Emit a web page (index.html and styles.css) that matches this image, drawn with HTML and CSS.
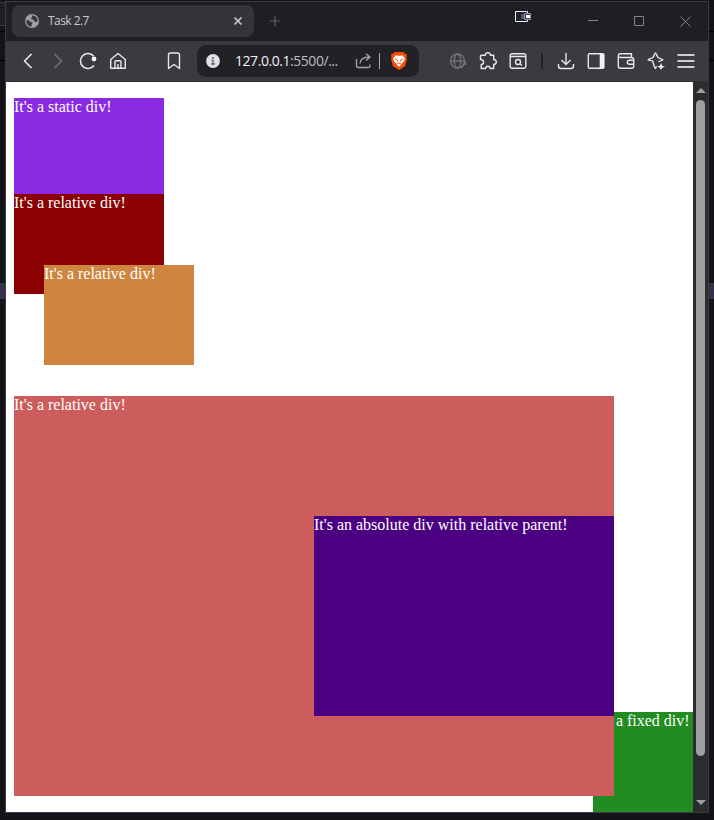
FILE: index.html
```html
<!DOCTYPE html>
<html lang="en">
<head>
<meta charset="utf-8">
<title>Task 2.7</title>
<link rel="stylesheet" href="styles.css">
</head>
<body>
<div class="window">
  <header class="titlebar">
    <div class="tab">
      <svg class="favicon" width="14" height="14" viewBox="-7 -7 14 14"><circle r="7" fill="#9aa0a6"/><path d="M-5.7-.7-2.9-.5-1 1.3.8 1.5-.3 3.2-.6 5.7C-3.5 5.5-5.8 3-5.7-.7ZM-.3-5.6.4-3.8-1-2.6-.4-1.4 1.7-1.2 2.6.7 4.7.9 5.7-.4C5.6-3.4 3-5.7-.3-5.6Z" fill="#35343a"/></svg>
      <span class="tab-title">Task 2.7</span>
      <svg class="tab-close" width="14" height="14" viewBox="-7 -7 14 14"><path d="M-3.5-3.5 3.5 3.5M3.5-3.5-3.5 3.5" stroke="#c9c9cc" stroke-width="1.7"/></svg>
    </div>
    <svg class="new-tab" width="12" height="12" viewBox="-6 -6 12 12"><path d="M-5.5 0H5.5M0-5.5V5.5" stroke="#605f64" stroke-width="1.2"/></svg>
    <svg class="mini" width="17" height="12" viewBox="0 0 17 12"><path d="M.5.5h12v10H.5Z" fill="#20202a" stroke="#eef" /><path d="M6 3h3v5H6Z" fill="#56565f"/><path d="M9.500 2.500h6v6h-6Z" fill="#39465e" stroke="#8093b2"/><path d="M11 4h4v3h-4Z" fill="#fff"/></svg>
    <svg class="controls" width="138" height="39" viewBox="0 0 138 39"><path d="M18 18.500H28M64.500 14.500h9v9h-9ZM110.500 14.500l10 10M120.500 14.500l-10 10" fill="none" stroke="#858388"/></svg>
  </header>

  <nav class="toolbar">
    <svg class="icon" viewBox="-15 -15 30 30"><path d="M3.500-7-3.500 0 3.500 7" stroke-width="1.700"/></svg>
    <svg class="icon dim" viewBox="-15 -15 30 30"><path d="M-3.500-7 3.500 0-3.500 7"/></svg>
    <svg class="icon" viewBox="-15 -15 30 30"><path d="M5.700-4.800A7.500 7.500 0 1 0 6 4.500" stroke-width="1.600"/><circle class="solid" cx="6" cy="-2" r="2.400"/></svg>
    <svg class="icon" viewBox="-15 -15 30 30"><path d="M-7.300-1.500 0-7.500 7.300-1.500V7.300H-7.300ZM-3 7V.7Q-3-.3-2-.3H2Q3-.3 3 .7V7M0 3v4"/></svg>
    <svg class="icon bookmark" viewBox="-15 -15 30 30"><path d="M-5.500 7.500V-6Q-5.500-8-3.500-8h7Q5.500-8 5.500-6V7.500L0 3.500Z"/></svg>
    <div class="address">
      <svg class="info" width="14" height="14" viewBox="-7 -7 14 14"><circle r="6.900" fill="#e1e0e6"/><path d="M-1.500-.7H0V3M-2 3H2" fill="none" stroke="#64636a" stroke-width="1.300"/><circle cy="-3" r="1" fill="#64636a"/></svg>
      <span class="url"><span class="host">127.0.0.1</span>:5500/...</span>
      <svg class="share" width="18" height="16" viewBox="0 0 18 16"><path d="M1.500 6v6.500Q1.500 14.500 3.500 14.500H13Q15 14.500 15 12.500V11.500M5 10.500Q5.500 4 14.500 4M11 .7 15 4 11 7.500" fill="none" stroke="#a7a6ac" stroke-width="1.300"/></svg>
      <span class="address-rule"></span>
      <svg class="shield" width="16" height="18" viewBox="-8 -9 16 18"><path d="M-4.500-9h9L6-7.200 8-6.800 7.500-4 8-2 6 5.200 0 9-6 5.200-8-2-7.500-4-8-6.800-6-7.200Z" fill="#fb4b05"/><path d="M-3.300-5.700-1-5.200H1l2.300-.5L6-2.500 4.700.8 2.500 2.600 2 4 0 5.700-2 4-2.500 2.600-4.700.8-6-2.500Z" fill="#fff"/><path d="M-4-2-1.800-1.300-1.200.8M4-2 1.800-1.300 1.200.8M-1.800 2.800 0 2 1.800 2.800" fill="none" stroke="#fb4b05" stroke-width=".9"/></svg>
    </div>
    <svg class="icon globe" viewBox="-15 -15 30 30"><circle cx="-.5" r="7"/><ellipse cx="-.5" rx="3.200" ry="7"/><path d="M-7.500 0H7M3.500 7 7.500 1V4"/></svg>
    <svg class="icon" viewBox="-15 -15 30 30"><path d="M-6.500-5.700H-2.600C-2.800-9.200 2.600-9.200 2.400-5.700H5.700V-1.500C9.200-1.200 9.200 3.300 5.700 3.500V7.500H2.200C2 4.500-2.200 4.500-2.400 7.500H-6.800V3.500C-3.500 3.200-3.500-1.200-7.500-1.500V-4.700Q-7.500-5.700-6.500-5.700Z"/></svg>
    <svg class="icon" viewBox="-15 -15 30 30"><rect x="-7.800" y="-7.300" width="15.600" height="14.600" rx="2"/><path d="M-7.500-4.500H7.500M2 3 4 4.500"/><circle cx="0" cy="1" r="2.500"/></svg>
    <span class="toolbar-rule"></span>
    <svg class="icon" viewBox="-15 -15 30 30"><path d="M0-8V3.500M-4.500-1 0 3.500 4.500-1M-7.500 3V5Q-7.500 7.500-5 7.500H5Q7.500 7.500 7.500 5V3"/></svg>
    <svg class="icon" viewBox="-15 -15 30 30"><rect x="-7.700" y="-7.300" width="15.600" height="14.600" rx="1"/><path class="solid" d="M3.700-7H8V7H3.700Z"/></svg>
    <svg class="icon" viewBox="-15 -15 30 30"><path d="M-7.700-5V5Q-7.700 7.300-5.500 7.300H5.500Q7.700 7.300 7.700 5V-1.500Q7.700-3.500 5.500-3.500H-6Q-7.700-3.500-7.700-5.200T-6-7.200H5.500V-3.500M8-.8H3.500Q1.300-.8 1.300 1.200T3.500 3.300H8"/></svg>
    <svg class="icon" viewBox="-15 -15 30 30"><path d="M1 5.200 0 7.500C-1 7.500-2 2-3-.2-5-.8-7.500-.5-7.500-1.200S-4-2.500-2.500-3.500C-1.500-5-.7-8 0-8S1.500-5 2.500-3.500C4-2.500 7.500-2 7.500-1.200S4-.3 3 .8" transform="translate(-.5)"/><path class="star" d="M5 2 6.200 4.700 9 5.700 6.200 6.700 5 9 3.800 6.700 1.200 5.700 3.800 4.700Z"/></svg>
    <svg class="icon menu" viewBox="-15 -15 30 30"><path d="M-8.500-6H8.500M-8.500 0H8.500M-8.500 6H8.500"/></svg>
  </nav>

  <div class="viewport">
    <main class="page">
      <div class="box static">It's a static div!</div>
      <div class="box relative">It's a relative div!</div>
      <div class="box shifted">It's a relative div!</div>
      <div class="fixed">It's a fixed div!</div>
      <div class="parent">It's a relative div!
        <div class="absolute">It's an absolute div with relative parent!</div>
      </div>
    </main>
    <div class="scrollbar">
      <span class="arrow up"></span>
      <span class="thumb"></span>
      <span class="arrow down"></span>
    </div>
  </div>
</div>
<span class="pane"></span>
<span class="edge left"></span>
<span class="edge right"></span>
</body>
</html>
```
FILE: styles.css
```css
* { box-sizing: border-box; }

body {
  margin: 0;
  height: 820px;
  padding: 1px 5px 7px;
  overflow: hidden;
  position: relative;
  background:
    linear-gradient(#000, #000) 0 31px / 100% 1px no-repeat,
    linear-gradient(#000, #000) 0 60px / 100% 1px no-repeat,
    #14131a;
}

.window {
  display: flex;
  flex-direction: column;
  width: 704px;
  height: 812px;
  border: 1px solid #3b3a3e;
}

.titlebar {
  display: flex;
  align-items: center;
  height: 39px;
  padding-left: 6px;
  background: #1f1e23;
}

.tab {
  display: flex;
  align-items: center;
  width: 242px;
  height: 32px;
  margin-top: -1px;
  padding: 0 9px 0 13px;
  border-radius: 8px;
  background: #35343a;
}

.tab-title {
  margin-left: 9px;
  color: #c9c8cd;
  font: 12px/16px "Open Sans", "Noto Sans", sans-serif;
  letter-spacing: -0.55px;
}

.tab-close { margin-left: auto; }
.new-tab { margin: -1px 0 0 15px; }
.mini { margin: -9px 0 0 234px; }
.controls { margin-left: auto; }

.toolbar {
  display: flex;
  align-items: center;
  height: 41px;
  padding: 0 7px 1px;
  border-bottom: 1px solid #302f33;
  background: #3b3a3f;
}

.icon {
  flex: none;
  width: 30px;
  height: 30px;
  fill: none;
  stroke: #e8e7ed;
  stroke-width: 1.4;
  stroke-linejoin: round;
}

.icon .solid { fill: #f2f1f7; stroke: none; }
.icon .star { fill: #f2f1f7; stroke: none; }
.dim { stroke: #77767b; }
.globe { stroke: #727176; }
.menu { stroke: #cfced3; stroke-width: 2; }
.bookmark { margin-left: 26px; }

.address {
  display: flex;
  align-items: center;
  width: 222px;
  height: 32px;
  margin: 0 24px 0 8px;
  padding-left: 9px;
  border-radius: 9px;
  background: #222126;
}

.url {
  width: 104px;
  margin-left: 15px;
  color: #bdbcc2;
  font: 14px/20px "Open Sans", "Noto Sans", sans-serif;
  letter-spacing: -0.45px;
  white-space: nowrap;
}

.host { color: #f1f0f5; }
.share { margin-left: 16px; }
.address-rule { width: 1px; height: 16px; margin-left: 6px; background: #aaa9ae; }
.shield { margin-left: 11px; }
.toolbar-rule { width: 2px; height: 16px; margin: 0 8px; background: #222126; }

.viewport {
  display: flex;
  flex: 1;
}

.page {
  position: relative;
  width: 687px;
  padding: 16px 8px 0;
  overflow: hidden;
  background: #fff;
  color: #fff;
  font: 16px/18px "Liberation Serif", "Times New Roman", serif;
}

.box { width: 150px; height: 100px; }
.static { background: blueviolet; }
.relative { position: relative; top: -4px; background: darkred; }
.shifted { position: relative; top: -33px; left: 30px; background: peru; }

.fixed {
  position: absolute;
  right: 0;
  bottom: 0;
  width: 100px;
  height: 100px;
  background: forestgreen;
}

.parent {
  position: relative;
  width: 600px;
  height: 400px;
  margin-top: -2px;
  background: indianred;
}

.absolute {
  position: absolute;
  right: 0;
  top: 120px;
  width: 300px;
  height: 200px;
  background: indigo;
}

.scrollbar {
  display: flex;
  flex-direction: column;
  align-items: center;
  width: 15px;
  padding: 6px 0 7px;
  background: #2c2c2c;
}

.arrow {
  border: 5px solid transparent;
  border-top-width: 0;
  border-bottom: 5px solid #9f9f9f;
}

.thumb {
  width: 9px;
  height: 656px;
  margin-top: 7px;
  border-radius: 5px;
  background: #9f9f9f;
}

.down { margin-top: auto; transform: rotate(180deg); }

/* Desktop showing on both sides of the window */
.pane {
  position: absolute;
  top: 2px;
  left: 0;
  width: 5px;
  height: 24px;
  border: solid #3b3a3e;
  border-width: 1px 0;
  background: #1f1e23;
}

.edge { position: absolute; top: 283px; width: 5px; height: 16px; background: #353148; }
.left { left: 0; }
.right { right: 0; }
```
